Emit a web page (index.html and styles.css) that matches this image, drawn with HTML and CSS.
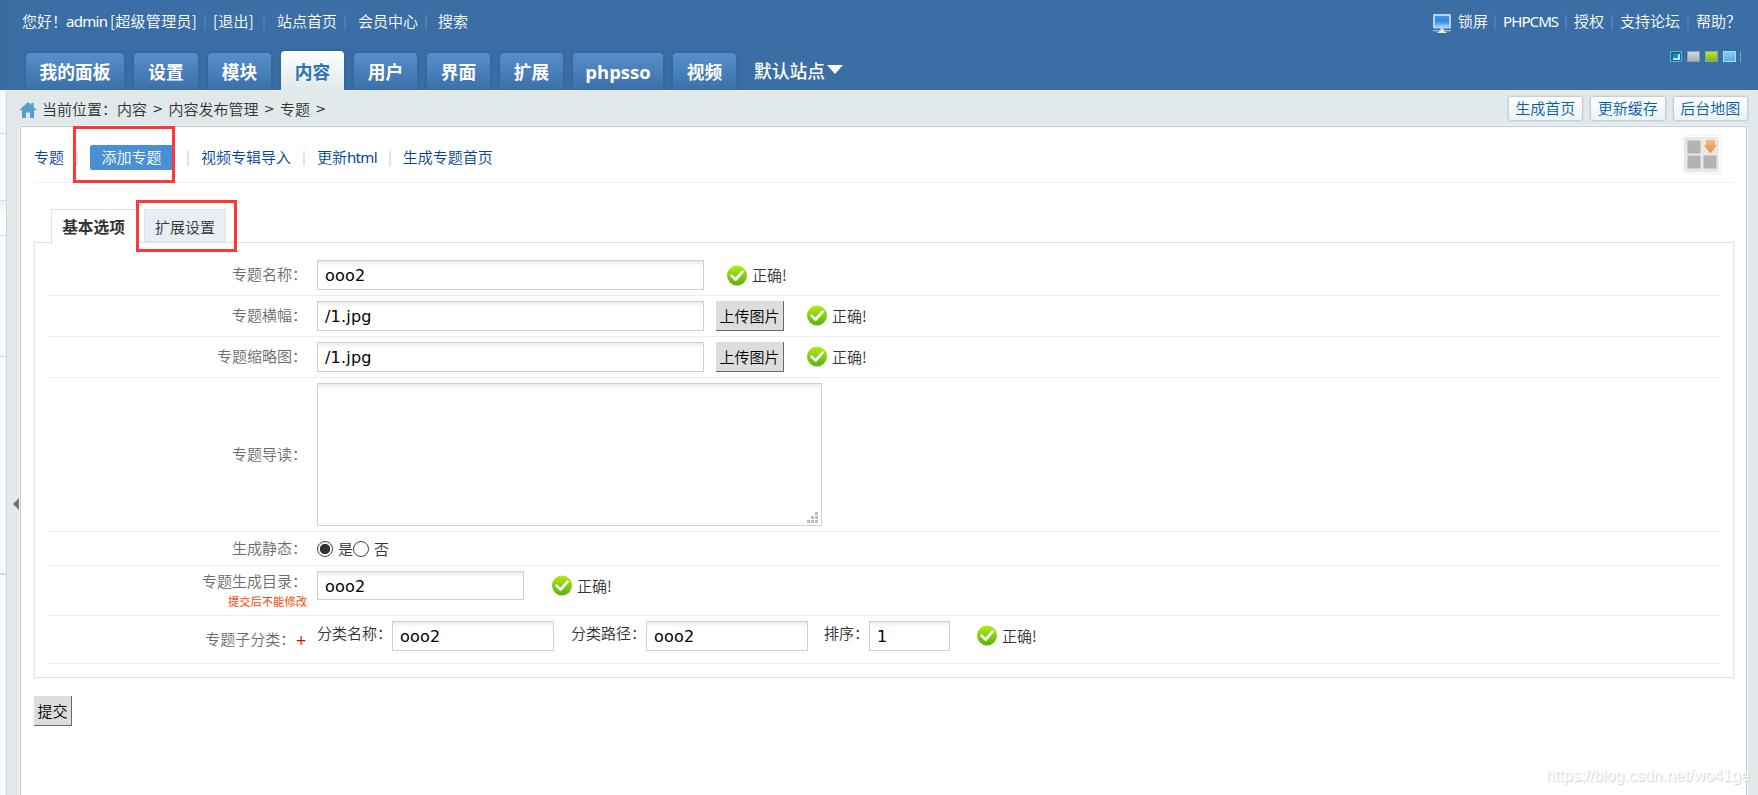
FILE: index.html
```html
<!DOCTYPE html>
<html lang="zh-CN">
<head>
<meta charset="utf-8">
<title>PHPCMS</title>
<link rel="stylesheet" href="styles.css">
</head>
<body>
<svg width="0" height="0" class="defs">
  <defs>
    <linearGradient id="green" x1="0" y1="0" x2="0" y2="1"><stop offset="0" stop-color="#b4ec12"/><stop offset="1" stop-color="#58b20c"/></linearGradient>
    <linearGradient id="screen" x1="0" y1="0" x2="0" y2="1"><stop offset="0" stop-color="#3f97ea"/><stop offset=".45" stop-color="#2f86e6"/><stop offset="1" stop-color="#9bd4fb"/></linearGradient>
    <linearGradient id="arrow" x1="0" y1="0" x2="0" y2="1"><stop offset="0" stop-color="#fbb977"/><stop offset="1" stop-color="#e88a55"/></linearGradient>
    <symbol id="ok" viewBox="0 0 20 21"><circle cx="10" cy="10.5" r="10" fill="url(#green)"/><path d="M4.6 10.6l4 3.9 7-7.8" fill="none" stroke="#fff" stroke-width="2.7" stroke-linecap="round" stroke-linejoin="round"/></symbol>
  </defs>
</svg>
<header class="header">
  <div class="topline">
    <nav class="user">
      <span>您好！</span><span class="admin">admin</span><span class="bracket">[超级管理员]</span><i></i><span class="bracket">[退出]</span><i></i><span>站点首页</span><i></i><span>会员中心</span><i></i><span>搜索</span>
    </nav>
    <nav class="links">
      <svg class="monitor" width="18" height="20" viewBox="0 0 18 20"><rect width="18" height="14.5" rx="1" fill="#b9d3ea"/><rect x="2" y="2" width="14" height="11" fill="url(#screen)"/><path d="M0 16h18v1.3H0z" fill="#9dbdd8"/><path d="M7.5 14.5h3v2.5l3 1v1h-9v-1l3-1z" fill="#e6eaec"/></svg>
      <span>锁屏</span><i></i><span class="php">PHPCMS</span><i></i><span>授权</span><i></i><span>支持论坛</span><i></i><span>帮助？</span>
    </nav>
  </div>
  <div class="menu">
    <a class="wide">我的面板</a><a>设置</a><a>模块</a><a class="on">内容</a><a>用户</a><a>界面</a><a>扩展</a><a class="sso">phpsso</a><a>视频</a>
    <span class="site">默认站点<svg width="16" height="9" viewBox="0 0 16 9"><path d="M0 0h16L8 9z" fill="#fff"/></svg></span>
    <div class="skins"><svg width="12" height="11" viewBox="0 0 12 11"><path d="M0 0h12v11H0z" fill="#5fb0d4"/><path d="M1 1h10v9H1z" fill="#0f6d92"/><path d="M3 7h5V3h2v6H3z" fill="#c4ebf5"/><path d="M3 3h5v4H3z" fill="#2190b8"/></svg><b class="s2"></b><b class="s3"></b><b class="s4"></b><b class="s5"></b></div>
  </div>
</header>
<div class="body">
  <aside class="side"><div class="p1"></div><div class="p2"></div><div class="p3"></div><div class="p4"></div><div class="p5"></div><div class="p6"></div></aside>
  <div class="gutter"><svg width="6" height="12" viewBox="0 0 6 12"><path d="M6 0v12L0 6z" fill="#707676"/></svg></div>
  <main class="main">
    <div class="crumbs">
      <svg width="18" height="16" viewBox="0 0 18 16"><path d="M9 0L0 8.2h3V16h4v-5.5h4V16h4V8.2h3L14.600 5V1h-2.500v1.800z" fill="#559fcd"/></svg>
      <span class="where">当前位置：</span><span>内容</span><em>&gt;</em><span>内容发布管理</span><em>&gt;</em><span>专题</span><em>&gt;</em>
      <div class="quick"><a>生成首页</a><a>更新缓存</a><a>后台地图</a></div>
    </div>
    <section class="content">
      <div class="subnav">
        <a>专题</a><i></i><a class="current">添加专题</a><i></i><a>视频专辑导入</a><i></i><a>更新<span class="html">html</span></a><i></i><a>生成专题首页</a>
        <svg class="shortcut" width="39" height="39" viewBox="0 0 39 39"><rect x=".5" y=".5" width="38" height="38" rx="1" fill="#fff" stroke="#f5f5f5"/><rect x="2" y="2" width="35" height="35" fill="#e8e8e8"/><path d="M5.500 5.500h13v13h-13zM5.500 20.500h13v13h-13zM21.500 20.500h13v13h-13z" fill="#b3b3b3"/><path d="M24 5h9v5h2l-6.500 8.500L21.500 10H24z" fill="url(#arrow)"/></svg>
      </div>
      <div class="tabs"><div class="tab active">基本选项</div><div class="tab">扩展设置</div></div>
      <form class="panel">
        <div class="row r1"><label>专题名称：</label><div class="input long">ooo2</div><div class="ok"><svg><use href="#ok"/></svg>正确!</div></div>
        <div class="row r2"><label>专题横幅：</label><div class="input long">/1.jpg</div><div class="btn">上传图片</div><div class="ok"><svg><use href="#ok"/></svg>正确!</div></div>
        <div class="row r2"><label>专题缩略图：</label><div class="input long">/1.jpg</div><div class="btn">上传图片</div><div class="ok"><svg><use href="#ok"/></svg>正确!</div></div>
        <div class="row r4"><label>专题导读：</label><div class="area"><svg width="11" height="11" viewBox="0 0 11 11"><path d="M8 0h3v3H8zM4 4h3v3H4zM8 4h3v3H8zM0 8h3v3H0zM4 8h3v3H4zM8 8h3v3H8z" fill="#bcbcbc"/></svg></div></div>
        <div class="row r5"><label>生成静态：</label><div class="radios"><b class="radio checked"></b><span>是</span><b class="radio"></b><span>否</span></div></div>
        <div class="row r6"><label>专题生成目录：<small>提交后不能修改</small></label><div class="input dir">ooo2</div><div class="ok"><svg><use href="#ok"/></svg>正确!</div></div>
        <div class="row r7"><label>专题子分类：<u>+</u></label><span>分类名称：</span><div class="input">ooo2</div><span class="path">分类路径：</span><div class="input">ooo2</div><span class="order">排序：</span><div class="input num">1</div><div class="ok"><svg><use href="#ok"/></svg>正确!</div></div>
      </form>
      <div class="btn submit">提交</div>
    </section>
  </main>
</div>
<div class="mark mark1"></div>
<div class="mark mark2"></div>
<div class="watermark">https://blog.csdn.net/wo41ge</div>
</body>
</html>
```

FILE: styles.css
```css
* { box-sizing: border-box; }
body {
  margin: 0; width: 1758px; height: 795px; overflow: hidden; position: relative;
  background: #e1e9ea; color: #333; white-space: nowrap;
  font: 350 15px/20px "Noto Sans CJK SC", sans-serif;
}
.defs { position: absolute; }
i, em, u { font-style: normal; text-decoration: none; }

.header { height: 90px; background: #3b6ea5; color: #fff; border-left: 7px solid #396b9f; }
.topline { display: flex; justify-content: space-between; height: 51px; padding: 11px 0 0 15px; }
.user, .links { display: grid; height: 20px; }
.user { grid-template-columns: 44px 44px 94px 9px 50px 14px 67px 14px 67px 13px 45px; }
.links { grid-template-columns: 25px 36px 9px 62px 9px 37px 9px 67px 9px 62px; }
.topline i { width: 2px; height: 15px; margin-top: 4px; background: #4a7fbb; }
.bracket { letter-spacing: .3px; }
.admin, .php, .html { font-family: "Noto Sans", sans-serif; font-weight: 400; letter-spacing: -.7px; }
.php { letter-spacing: -.9px; }
.monitor { margin-top: 3px; }

.menu { display: flex; align-items: flex-end; height: 39px; padding-left: 19px; }
.menu a {
  width: 63px; height: 37px; margin-right: 10px; border-radius: 4px 4px 0 0; text-align: center;
  font: 700 17.7px/36px "Noto Sans CJK SC", sans-serif;
  background: linear-gradient(#5590cd, #3c6fa8); box-shadow: 0 -1px 4px #2f609a;
}
.menu a.wide { width: 98px; }
.menu a:nth-child(2) { width: 64px; }
.menu a.on { height: 39px; line-height: 40px; color: #2a73b4; background: linear-gradient(#fff, #e1e9ea); }
.menu a.sso { width: 90px; font: 700 18.5px/37px "Open Sans", sans-serif; }
.site { display: flex; align-items: center; align-self: flex-start; height: 37px; margin: 0 0 0 8px; font-size: 17.8px; font-weight: 500; }
.site svg { margin-left: 2px; }
.skins { display: flex; align-self: flex-start; gap: 5px; margin: 0 17px 0 auto; }
.skins b { width: 13px; height: 11px; border: 1px solid #7ea3c8; }
.skins .s2 { background: linear-gradient(#d8dadd, #a9adb2); }
.skins .s3 { background: linear-gradient(#c5e41c, #80b90d); }
.skins .s4 { border-color: #9fe0ff; background: linear-gradient(#8bcdf5, #51aee6); }
.skins .s5 { width: 1px; margin-left: -1px; border-width: 0 0 0 1px; }

.body { display: flex; height: 705px; position: relative; background: #e1e9ea; }
.side { width: 7px; background: #f6fafb; border-right: 1px solid #c9d8dd; }
.side div { border-bottom: 1px solid #d0dbe2; }
.p1 { height: 44px; } .p2 { height: 67px; } .p3 { height: 35px; background: linear-gradient(#edf1f1, #fff 50%); } .p4 { height: 121px; } .p5 { height: 217px; } .p6 { height: 0; }
.gutter { width: 13px; padding: 408px 0 0 6px; }
.gutter svg { display: block; }
.main { width: 1727px; }
.crumbs { display: flex; align-items: center; height: 36px; padding: 2px 0 0; }
.crumbs > svg { margin: 1px 5px 0 -1px; }
.crumbs .where { width: 75px; }
.crumbs em { width: 21.500px; text-align: center; font-family: "DejaVu Sans", sans-serif; font-size: 13px; font-weight: 400; }
.quick { display: flex; gap: 7px; margin: 0 -1px 0 auto; transform: translateY(-1px); }
.quick a { width: 75.500px; height: 25px; border: 1px solid #c2d1d8; border-radius: 3px; background: linear-gradient(#fff, #eef2f2); color: #005eac; text-align: center; line-height: 22px; box-shadow: 0 0 0 1px #d6e0e3; }
.content { height: 680px; padding-left: 13px; border: 1px solid #bccbd2; background: #fff; outline: 1px solid #f2f6f7; }
.subnav { display: flex; align-items: center; width: 1700px; height: 56px; padding-top: 5px; border-bottom: 1px solid #eee; color: #004499; }
.subnav i { width: 2px; height: 15px; background: #dce4ed; margin: 2px 12px 0; }
.subnav a + i { margin-left: 12px; }
.subnav .current { width: 83px; height: 25px; line-height: 24px; text-align: center; color: #fff; background: #498fd3; border-radius: 2px; margin-right: 2px; }
.subnav .shortcut { margin: -5px 13px 0 auto; }
.tabs { display: flex; height: 59px; padding: 26px 0 0 17px; }
.tab { width: 82px; height: 33px; border: 1px solid #dce3ed; background: #e9edf6; line-height: 34px; text-align: center; }
.tab.active { width: 86px; height: 35px; margin-right: 7px; padding-right: 2px; border-width: 1px 0 0 1px; background: #fff; font-weight: 700; font-size: 15.700px; position: relative; color: #333; }
.panel { width: 1700px; height: 436px; padding: 12px 13px 0 12px; border: 1px solid #dce3ed; }
.row { display: flex; align-items: flex-start; height: 41px; padding-top: 5px; border-bottom: 1px solid #eee; }
.row label { width: 260px; margin-right: 10px; padding: 4px 0 0; text-align: right; color: #6c6c6c; flex: none; }
.input, .area { border: 1px solid #d0d0d0; background: linear-gradient(#ebebeb, #fff 5px); }
.input { width: 162px; height: 30px; padding-left: 7px; color: #000; font: 400 16px/30px "DejaVu Sans", sans-serif; letter-spacing: .2px; }
.long { width: 387px; }
.dir { width: 207px; height: 29px; }
.num { width: 81px; }
.btn { width: 68px; height: 30px; margin-left: 12px; background: #ddd; border: solid #696969; border-width: 0 1px 1px 0; line-height: 29px; text-align: center; color: #000; }
.ok { display: flex; align-items: center; height: 30px; margin-left: 23px; }
.ok svg { width: 20px; height: 21px; margin-right: 5px; flex: none; }
.r2 .ok svg, .r7 .ok svg { margin-top: -2px; }
.r4 { height: 154px; }
.r4 label { padding-top: 61px; }
.area { display: flex; align-items: flex-end; justify-content: flex-end; width: 505px; height: 143px; padding: 0 3px 2px; }
.r5 { height: 34px; padding-top: 2px; }
.radios { display: flex; align-items: center; height: 30px; }
.radio { width: 16px; height: 16px; border: 1px solid #444; border-radius: 50%; margin-right: 5px; }
.checked { background: radial-gradient(circle, #333 4.800px, #fff 5.500px); }
.r6 { height: 50px; }
.r6 label { padding-top: 0; }
.r6 small { display: block; color: #f40; font-size: 11.300px; font-weight: 400; line-height: 20px; }
.r7 { height: 48px; }
.r6 .ok { margin-left: 28px; height: 29px; }
.r7 label { padding-top: 8px; }
.r7 span { width: 75px; padding-top: 2px; }
.r7 .path { margin-left: 17px; }
.r7 .order { width: 45px; margin-left: 16px; }
.r7 u { font: 400 14px/20px "DejaVu Sans", sans-serif; color: #e00; }
.r7 .ok { margin-left: 27px; }
.submit { width: 38px; margin: 18px 0 0; }
.mark { position: absolute; border: 3px solid #fd3838; }
.mark1 { left: 73px; top: 126px; width: 102px; height: 57px; }
.mark2 { left: 136px; top: 200px; width: 101px; height: 52px; }
.watermark { position: absolute; left: 1546px; top: 766px; font: 400 16px/20px "Liberation Sans", sans-serif; color: #fff; text-shadow: 1px 1px 1px #ccc; }
```
